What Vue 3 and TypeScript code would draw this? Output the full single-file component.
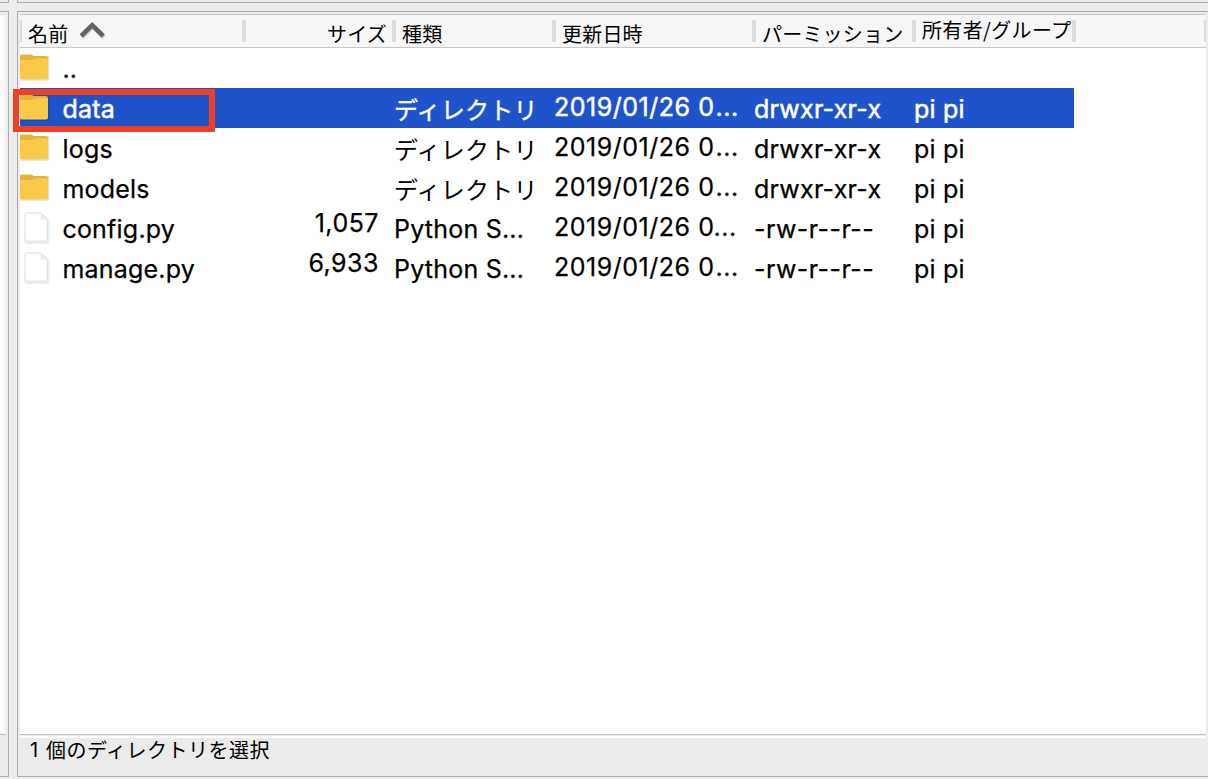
<script setup lang="ts">
interface Entry {
  name: string
  kind: 'folder' | 'file'
  size?: string
  type?: string
  date?: string
  perm?: string
  owner?: string
  selected?: boolean
  tightDate?: boolean
}

const entries: Entry[] = [
  { name: '..', kind: 'folder' },
  { name: 'data', kind: 'folder', type: 'ディレクトリ', date: '2019/01/26 0', perm: 'drwxr-xr-x', owner: 'pi pi', selected: true },
  { name: 'logs', kind: 'folder', type: 'ディレクトリ', date: '2019/01/26 0', perm: 'drwxr-xr-x', owner: 'pi pi' },
  { name: 'models', kind: 'folder', type: 'ディレクトリ', date: '2019/01/26 0', perm: 'drwxr-xr-x', owner: 'pi pi' },
  { name: 'config.py', kind: 'file', size: '1,057', type: 'Python S...', date: '2019/01/26 0', perm: '-rw-r--r--', owner: 'pi pi', tightDate: true },
  { name: 'manage.py', kind: 'file', size: '6,933', type: 'Python S...', date: '2019/01/26 0', perm: '-rw-r--r--', owner: 'pi pi' },
]
</script>

<template>
  <div class="window">
    <div class="stub stub-left"></div>
    <div class="stub stub-right"></div>
    <div class="pane side">
      <div class="side-list"></div>
    </div>
    <div class="pane main">
      <div class="header">
        <div class="th c-name"><span>名前</span>
          <svg class="sort" width="28" height="20" viewBox="0 0 28 20">
            <path d="M3 16.5 L14 5.5 L25 16.5" fill="none" stroke="#d4d4d4" stroke-width="4.4" />
            <path d="M2.2 15 L13.2 4.2 L24.2 15" fill="none" stroke="#636363" stroke-width="4.6" />
          </svg>
        </div>
        <div class="th c-size"><span>サイズ</span></div>
        <div class="th c-type"><span>種類</span></div>
        <div class="th c-date"><span>更新日時</span></div>
        <div class="th c-perm"><span>パーミッション</span></div>
        <div class="th c-owner"><span>所有者/グループ</span></div>
        <div class="th c-rest"></div>
        <div class="th c-end"></div>
      </div>
      <div class="list">
        <div v-for="e in entries" :key="e.name" class="row" :class="[e.kind, { selected: e.selected }]">
          <div class="td c-name">
            <svg v-if="e.kind === 'folder'" class="icon" width="42" height="40" viewBox="0 0 42 40">
              <path d="M0 8h27.5q2 0 2 2v21q0 2-2 2H1z" fill="#000" opacity=".1" />
              <path d="M0 7.2Q.6 6.4 2 6.4h8.500q1 0 1.800.7l1.200 1h12.500q2 0 2 2V20H0z" fill="#e2b43e" />
              <path d="M0 12h10.500q1.500 0 2.700-.7l1-.6q.8-.5 1.800-.5h10.500q1.500 0 1.500 1.500v18q0 1.800-1.800 1.800H1.800Q.3 31.500 0 30.500z" fill="#f9ca47" />
            </svg>
            <svg v-else class="icon" width="42" height="40" viewBox="0 0 42 40">
              <path d="M7 7h15l6.500 6v20q0 2-2 2H7q-1.500 0-1.500-1.500z" fill="#ebebeb" stroke="#ededed" stroke-width="2" />
              <path d="M6.500 5.200h13.500q1 0 1.700.7l5 5q.6.6.6 1.600v19q0 1.500-1.500 1.500H6.500Q5 33 5 31.500V6.700q0-1.500 1.500-1.500z" fill="#fff" stroke="#e5e5e5" stroke-width="1.200" />
              <path d="M20.800 5.400v4.700q0 1.700 1.700 1.700h4.500z" fill="#ededed" />
            </svg>
            <span class="label">{{ e.name }}</span>
          </div>
          <div class="td c-size">{{ e.size }}</div>
          <div class="td c-type">{{ e.type }}</div>
          <div class="td c-date">{{ e.date }}<span v-if="e.date" class="dots" :class="{ tight: e.tightDate }">...</span></div>
          <div class="td c-perm">{{ e.perm }}</div>
          <div class="td c-owner">{{ e.owner }}</div>
        </div>
        <div class="highlight"></div>
      </div>
      <div class="status"><span class="count">1</span><span>個のディレクトリを選択</span></div>
    </div>
  </div>
</template>

<style>
html, body { margin: 0; overflow: hidden; background: #ececec; }
</style>

<style scoped>
.window {
  width: 1208px;
  height: 779px;
  overflow: hidden;
  display: grid;
  grid-template-columns: 9px 1191px;
  grid-template-rows: 3px 766px;
  gap: 8px;
  background: #ececec;
  color: #000;
  font-family: Inter, "Noto Sans CJK JP", sans-serif;
}
.window * { box-sizing: border-box; }
.stub { border-bottom: 1px solid #adadad; }
.stub-left, .side { border-right: 1px solid #adadad; }
.stub-right, .main { border-left: 1px solid #adadad; }
.pane { border-top: 1px solid #adadad; border-bottom: 1px solid #adadad; }
.side { padding-top: 2px; }
.side-list {
  width: 6px;
  height: 721px;
  border-top: 1px solid #e0e0e0;
  border-bottom: 1px solid #c0c0c0;
  background: linear-gradient(to right, #fbfbfb 4px, #f3f3f3 4px);
}
.main {
  padding: 2px 2px 0 2px;
  display: flex;
  flex-direction: column;
}
.header {
  height: 34px;
  flex: none;
  display: flex;
  overflow: hidden;
  background: #f6f6f6;
  border-top: 1px solid #c8c8c8;
  border-bottom: 1px solid #c8c8c8;
  font-family: "Noto Sans CJK JP", sans-serif;
  font-size: 20px;
  line-height: 32px;
  letter-spacing: .2px;
  white-space: nowrap;
}
.th { flex: none; display: flex; padding-top: 3px; }
.th::before {
  content: "";
  flex: none;
  width: 4px;
  height: 22px;
  margin: 2px 6px 0 0;
  background: #dcdcdc;
}
.th.c-name { margin-left: -2px; }
.th.c-name span { margin-right: 11px; }
.sort { margin-top: 3px; }
.th.c-size::before { margin-right: auto; }
.th.c-size { padding-right: 5px; }
.th.c-owner span { margin-top: -4px; letter-spacing: .35px; }
.c-name { width: 224px; }
.c-size { width: 150px; }
.c-type { width: 160px; }
.c-date { width: 200px; }
.c-perm { width: 160px; }
.c-owner { width: 160px; }
.c-rest { width: 132px; }
.c-end { width: 4px; }
.list {
  position: relative;
  height: 686px;
  flex: none;
  background: #fff;
}
.row {
  width: 1054px;
  height: 40px;
  display: flex;
  font-size: 25px;
  line-height: 40px;
  letter-spacing: .22px;
  white-space: nowrap;
  -webkit-text-stroke: .25px currentColor;
}
.row.selected { background: #1e53c9; color: #fff; -webkit-text-stroke-width: .5px; }
.td { flex: none; height: 40px; padding-top: 1px; }
.td.c-name { display: flex; padding-top: 0; }
.icon { flex: none; }
.label { padding: 1px 0 0 .4px; }
.td.c-size { padding: 0 15px 0 0; text-align: right; line-height: 30px; letter-spacing: .5px; }
.td.c-date { line-height: 38px; padding-top: 0; letter-spacing: .5px; word-spacing: .3px; }
.dots { letter-spacing: .6px; margin-left: 1px; }
.dots.tight { margin-left: -1px; }
.folder .c-type {
  font-family: "Noto Sans CJK JP", sans-serif;
  font-size: 24px;
  -webkit-text-stroke-width: 0;
}
.selected .c-type { -webkit-text-stroke-width: .4px; }
.file .c-perm { letter-spacing: .42px; }
.highlight {
  position: absolute;
  left: -7px;
  top: 41px;
  width: 202px;
  height: 43px;
  border: 6px solid #ed4025;
}
.status {
  flex: 1;
  display: flex;
  padding-left: 10px;
  border-top: 1px solid #c0c0c0;
  background: linear-gradient(to bottom, #ececec 1px, #fff 1px, #fff 3px, #ebebeb 3px);
  font-family: "Noto Sans CJK JP", sans-serif;
  font-size: 20px;
  letter-spacing: .5px;
  line-height: 30px;
}
.count { width: 16px; font-family: Inter, sans-serif; }
</style>
